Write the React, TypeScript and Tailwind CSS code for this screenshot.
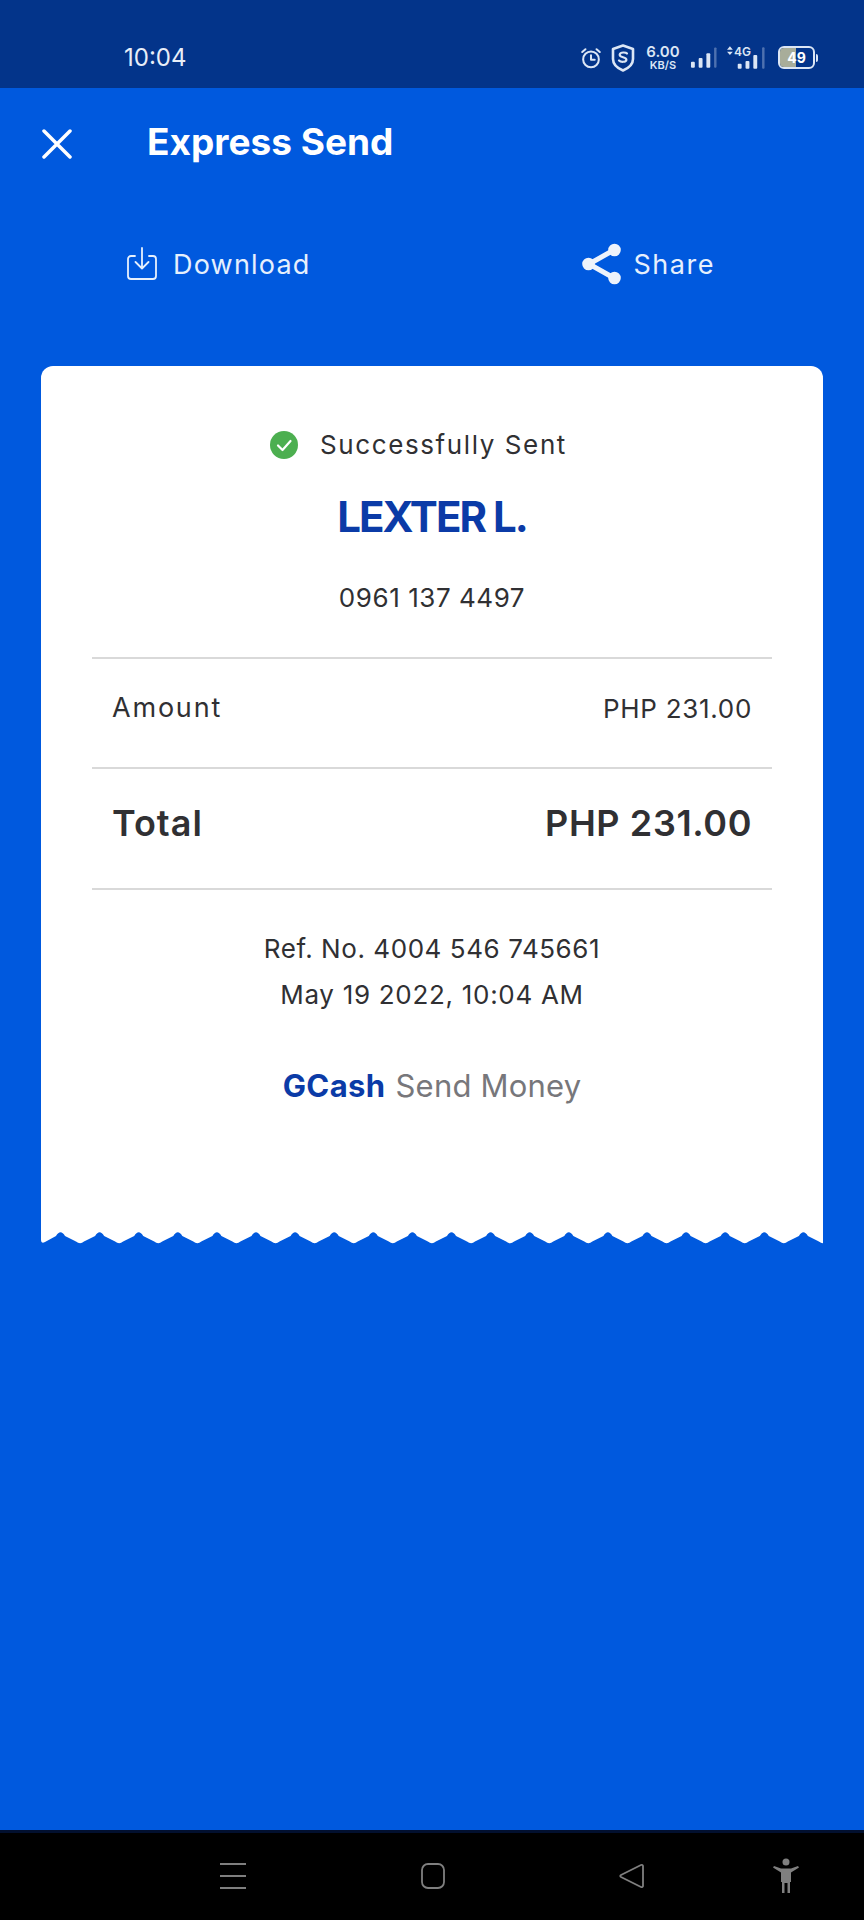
const waveTeeth = Array.from({ length: 20 }, (_, i) => {
  const x = i * 39.1;
  return `L${x + 15} 5 Q${x + 19.5} -2.5 ${x + 24} 5 L${x + 35} 10.5 Q${x + 39.1} 14 ${x + 43} 10.5`;
}).join(' ');

function StatusIcons() {
  return (
    <div className="flex items-center text-[#dce6f5]">
      <svg width="24" height="26" viewBox="0 0 26 26" fill="none" stroke="currentColor" strokeWidth="2.2" strokeLinecap="round" strokeLinejoin="round">
        <circle cx="13" cy="14.5" r="8.5" />
        <path d="M13 10v5h4M3.500 6.500l3.500-3M22.500 6.500l-3.500-3" />
      </svg>
      <svg className="ml-[7px]" width="26" height="30" viewBox="0 0 26 30" fill="none" stroke="currentColor" strokeWidth="2.6" strokeLinejoin="round">
        <path d="M13 2.500l10 3.500v10c0 5.500-4 9-10 11.500C7 25 3 21.500 3 16V6z" />
        <path d="M17 10.500c-1-1.200-6.500-1.800-7.300 1-.6 3.500 7 2 6.700 5.300-.3 2.500-5.700 2.500-7.400.7" strokeWidth="2.200" strokeLinecap="round" />
      </svg>
      <div className="ml-[9px] flex w-[36px] flex-col items-center font-['Inter',sans-serif] font-semibold">
        <span className="text-[15px] leading-[16px]">6.00</span>
        <span className="text-[11px] leading-[11px]">KB/S</span>
      </div>
      <svg className="ml-[9px]" width="27" height="22" viewBox="0 0 28 22" fill="currentColor">
        <rect x="1" y="15" width="4" height="6" rx="1" />
        <rect x="9" y="11" width="4" height="10" rx="1" />
        <rect x="17" y="6" width="4" height="15" rx="1" />
        <rect x="25" y="0" width="2.500" height="21" rx="1" opacity="0.35" />
      </svg>
      <div className="relative ml-[10px] h-[26px] w-[39px]">
        <svg className="absolute inset-0" width="39" height="26" viewBox="0 0 40 26" fill="currentColor">
          <path d="M3 1L6 4.500H0zM3 10L0 6.500h6z" />
          <rect x="11" y="19" width="4" height="5" rx="1" />
          <rect x="19" y="16" width="4" height="8" rx="1" />
          <rect x="27" y="10" width="4" height="14" rx="1" />
          <rect x="36" y="2" width="2.500" height="22" rx="1" opacity="0.35" />
        </svg>
        <span className="absolute left-[7px] top-0 font-['Inter',sans-serif] text-[12px] font-semibold leading-[13px]">4G</span>
      </div>
      <div className="ml-[12px] flex items-center">
        <div className="relative h-[23px] w-[37px] overflow-hidden rounded-[6px] border-2 border-[#dce6f5]">
          <div className="h-full w-[47%] bg-[#a8ad9a]" />
          <span className="absolute inset-0 flex items-center justify-center font-['Inter',sans-serif] text-[14px] font-bold leading-none text-white">49</span>
        </div>
        <div className="ml-[1px] h-[8px] w-[2px] rounded-r bg-[#dce6f5]" />
      </div>
    </div>
  );
}

export default function App() {
  return (
    <div className="flex h-[1920px] w-[864px] flex-col overflow-hidden bg-[#0059de] font-['Inter',sans-serif]">
      <div className="flex h-[88px] items-center justify-between bg-[#03348a] pl-[124px] pr-[46px] pt-[27px]">
        <span className="text-[24px] leading-none text-[#e8eef8]">10:04</span>
        <StatusIcons />
      </div>

      <div className="flex h-[112px] items-center pl-[42px]">
        <svg width="30" height="30" viewBox="0 0 30 30" fill="none" stroke="white" strokeWidth="3.500" strokeLinecap="round">
          <path d="M2 2l26 26M28 2L2 28" />
        </svg>
        <h1 className="mb-[6px] ml-[75px] text-[37px] font-bold leading-none text-white">Express Send</h1>
      </div>

      <div className="mb-[38px] flex h-[128px] items-center">
        <div className="ml-[126px] flex items-center text-[#e6f0fd]">
          <svg width="32" height="34" viewBox="0 0 32 34" fill="none" stroke="currentColor" strokeWidth="1.800" strokeLinecap="round" strokeLinejoin="round">
            <path d="M9 9H5a3 3 0 0 0-3 3v17a3 3 0 0 0 3 3h22a3 3 0 0 0 3-3V12a3 3 0 0 0-3-3h-4" />
            <path d="M16 1v20M9.500 15l6.500 6.500 6.500-6.500" />
          </svg>
          <span className="ml-[15px] text-[27px] leading-none tracking-[1.200px]">Download</span>
        </div>
        <div className="ml-[270px] flex items-center text-[#e6f0fd]">
          <svg width="42" height="42" viewBox="0 0 42 42" fill="#eef3fb" stroke="#eef3fb" strokeWidth="5">
            <path d="M33 7L8 21l25 14" fill="none" />
            <circle cx="33.500" cy="7" r="3.800" />
            <circle cx="7.500" cy="21" r="3.800" />
            <circle cx="33.500" cy="35" r="3.800" />
          </svg>
          <span className="ml-[11px] text-[27px] leading-none tracking-[1.500px]">Share</span>
        </div>
      </div>

      <div className="ml-[41px] flex w-[782px] flex-col">
        <div className="flex h-[865px] flex-col items-center rounded-t-[12px] bg-white pt-[61px] text-[#303033]">
          <div className="mr-[28px] flex h-[36px] items-center">
            <svg width="30" height="30" viewBox="0 0 30 30">
              <circle cx="15" cy="15" r="14" fill="#4caf50" />
              <path d="M9 15.500l4.500 4.500 8-9" fill="none" stroke="white" strokeWidth="2.200" strokeLinecap="round" strokeLinejoin="round" />
            </svg>
            <span className="ml-[21px] text-[26px] leading-none tracking-[1.600px]">Successfully Sent</span>
          </div>
          <h2 className="mt-[26px] text-[42px] font-bold leading-[56px] tracking-[-2px] text-[#0b3ba7]">LEXTER L.</h2>
          <p className="mt-[35px] text-[26px] leading-[36px] tracking-[0.550px]">0961 137 4497</p>

          <div className="mt-[41px] w-[680px] border-t-2 border-[#d9d9d9]">
            <div className="flex h-[110px] items-center justify-between border-b-2 border-[#d9d9d9] px-[20px] pb-[10px]">
              <span className="text-[27px] tracking-[1.800px]">Amount</span>
              <span className="text-[26px] tracking-[0.700px]">PHP 231.00</span>
            </div>
            <div className="flex h-[121px] items-center justify-between border-b-2 border-[#d9d9d9] px-[20px] pb-[11px]">
              <span className="text-[36px] font-semibold tracking-[1px]">Total</span>
              <span className="text-[36px] font-semibold tracking-[0.600px]">PHP 231.00</span>
            </div>
          </div>

          <p className="mt-[36px] text-[26px] leading-[46px] tracking-[0.560px]">Ref. No. 4004 546 745661</p>
          <p className="text-[26px] leading-[46px] tracking-[0.700px]">May 19 2022, 10:04 AM</p>
          <p className="mt-[45px] text-[31px] leading-[46px]">
            <span className="font-bold tracking-[0.400px] text-[#0b3ba7]">GCash</span>
            <span className="ml-[10px] tracking-[0.200px] text-[#77777b]">Send Money</span>
          </p>
        </div>
        <svg className="block" width="782" height="13" viewBox="0 0 782 13" fill="white">
          <path d={`M0 0 V9 Q0 13 4 11 ${waveTeeth} L786 0 Z`} />
        </svg>
      </div>

      <div className="mt-auto flex h-[90px] items-center border-t-[3px] border-[#02102f] bg-black pb-[2px] text-[#7f7f7f]">
        <svg className="ml-[220px]" width="26" height="28" viewBox="0 0 26 28" stroke="currentColor" strokeWidth="2">
          <path d="M0 2h26M0 14h26M0 26h26" />
        </svg>
        <svg className="ml-[175px]" width="24" height="26" viewBox="0 0 24 26" fill="none" stroke="currentColor" strokeWidth="1.800">
          <rect x="1" y="1" width="22" height="24" rx="6" />
        </svg>
        <svg className="ml-[174px]" width="26" height="26" viewBox="0 0 26 26" fill="none" stroke="currentColor" strokeWidth="1.800" strokeLinejoin="round">
          <path d="M24 3v20c0 1-1 1.500-2 1L2 14c-1-.6-1-1.400 0-2L22 2c1-.5 2 0 2 1z" />
        </svg>
        <svg className="ml-[128px]" width="26" height="36" viewBox="0 0 26 36" fill="currentColor">
          <circle cx="13" cy="4" r="3.500" />
          <path d="M0 9.500l1-1.500 7 2.500h10l7-2.500 1 1.500-8 5V24h-1v11h-2.500V25h-3v10H9V24H8v-9.500z" />
        </svg>
      </div>
    </div>
  );
}
